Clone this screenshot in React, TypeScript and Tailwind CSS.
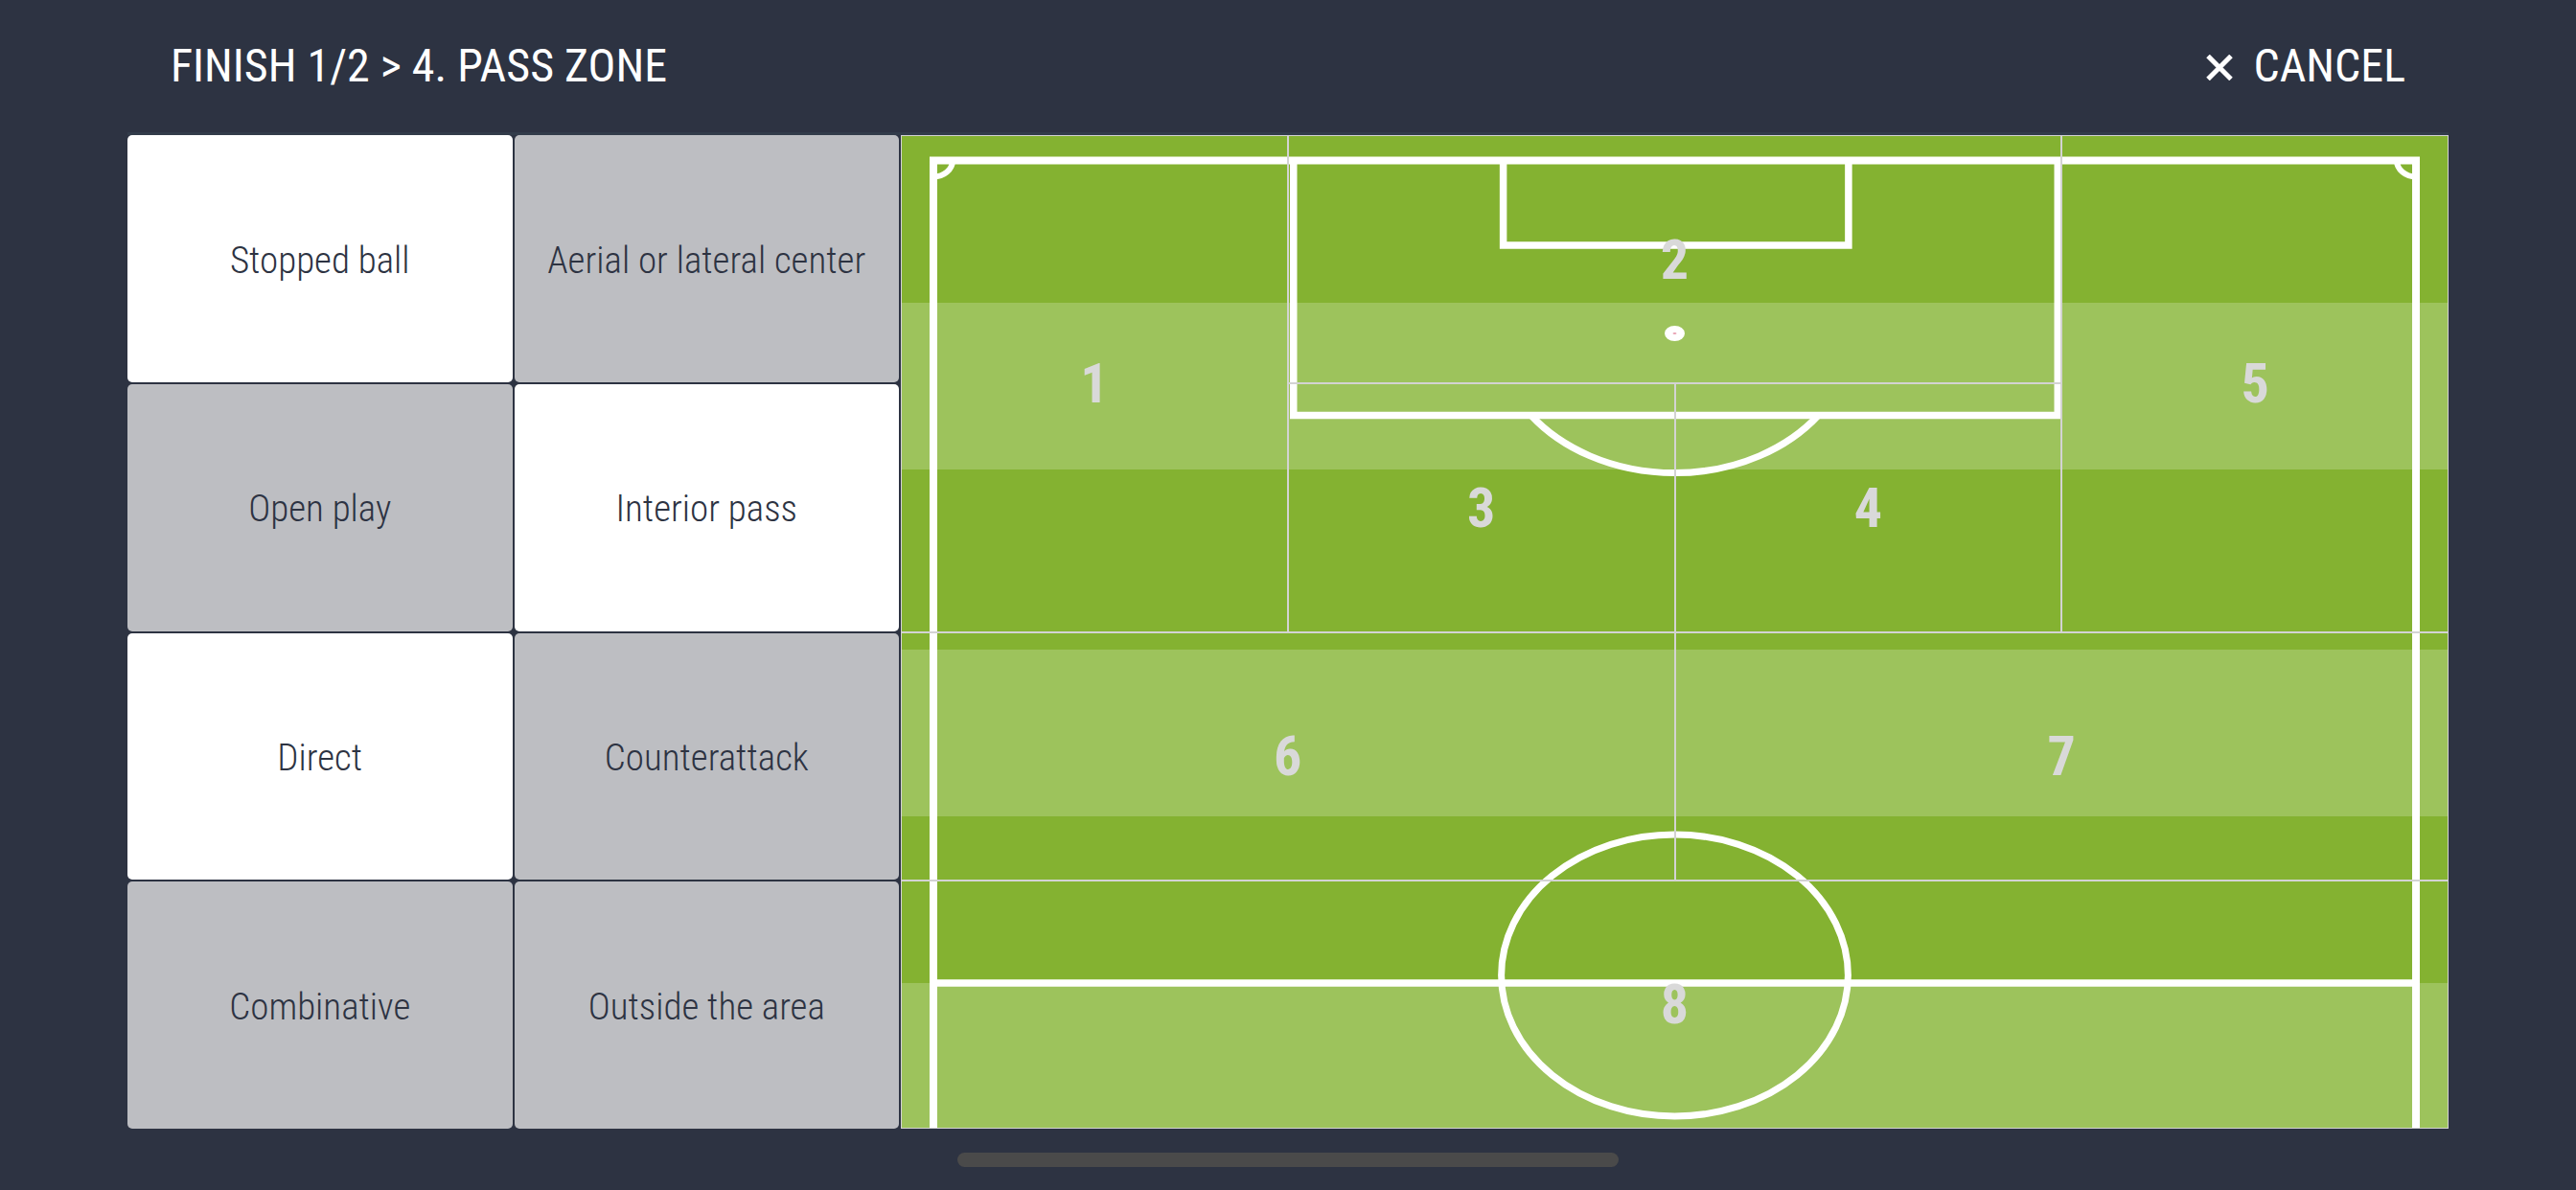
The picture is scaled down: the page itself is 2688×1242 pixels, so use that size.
import React from 'react';

type Cell = { label: string; active: boolean };

const CELLS: Cell[] = [
  { label: 'Stopped ball', active: true },
  { label: 'Aerial or lateral center', active: false },
  { label: 'Open play', active: false },
  { label: 'Interior pass', active: true },
  { label: 'Direct', active: true },
  { label: 'Counterattack', active: false },
  { label: 'Combinative', active: false },
  { label: 'Outside the area', active: false },
];

// zones laid over the pitch, 4x4 grid
const ZONES = [
  { n: 1, cls: 'col-start-1 row-start-1 row-span-2' },
  { n: 2, cls: 'col-start-2 col-span-2 row-start-1' },
  { n: 3, cls: 'col-start-2 row-start-2' },
  { n: 4, cls: 'col-start-3 row-start-2' },
  { n: 5, cls: 'col-start-4 row-start-1 row-span-2' },
  { n: 6, cls: 'col-start-1 col-span-2 row-start-3' },
  { n: 7, cls: 'col-start-3 col-span-2 row-start-3' },
  { n: 8, cls: 'col-start-1 col-span-4 row-start-4' },
];

function CloseIcon() {
  return (
    <svg width="28" height="27" viewBox="0 0 28 27" className="mt-[2px]">
      <path d="M2 1.5 L26 25.5 M26 1.5 L2 25.5" stroke="white" strokeWidth="5" />
    </svg>
  );
}

function PitchDrawing() {
  const line = { stroke: 'white', strokeWidth: 7.5, fill: 'none' };
  return (
    <svg
      className="absolute inset-0 w-full h-full"
      viewBox="0 0 1616 1037"
      preserveAspectRatio="none"
    >
      {/* stripes */}
      <rect x="0" y="0" width="1616" height="1037" fill="#84b231" />
      <rect x="0" y="175" width="1616" height="174" fill="#9dc35c" />
      <rect x="0" y="537" width="1616" height="174" fill="#9dc35c" />
      <rect x="0" y="885" width="1616" height="152" fill="#9dc35c" />

      {/* outer lines */}
      <path d="M34 1037 V26.5 H1582 V1037" {...line} strokeWidth={8} />
      <path d="M54 26.5 A20 17 0 0 1 34 43.5" {...line} strokeWidth={6} />
      <path d="M1562 26.5 A20 17 0 0 0 1582 43.5" {...line} strokeWidth={6} />

      {/* penalty area */}
      <path d="M410 26.5 V292.5 H1208 V26.5" {...line} />
      <path d="M629 26.5 V115 H989.5 V26.5" {...line} />
      <ellipse cx="808" cy="207" rx="10.5" ry="8" fill="white" />
      <ellipse cx="808" cy="207" rx="2" ry="1" fill="#e9a3b4" />
      <path d="M658 292.5 A186.5 148 0 0 0 958 292.5" {...line} strokeWidth={7} />

      {/* halfway line + centre circle */}
      <path d="M34 885 H1582" {...line} />
      <ellipse cx="808" cy="877" rx="181" ry="147" {...line} strokeWidth={7} />
    </svg>
  );
}

function Pitch() {
  return (
    <div className="relative flex-1">
      <PitchDrawing />
      <div className="absolute inset-0 grid grid-cols-4 grid-rows-4">
        {ZONES.map((z) => (
          <div
            key={z.n}
            className={`${z.cls} border border-[#d3d3d3] flex items-center justify-center`}
          >
            <span className="text-[58px] leading-none font-bold text-[#d9d9d9]">{z.n}</span>
          </div>
        ))}
      </div>
    </div>
  );
}

export default function App() {
  return (
    <div className="h-[1242px] w-full bg-[#2d3342] flex flex-col font-['Roboto_Condensed',Roboto,sans-serif] overflow-hidden">
      <header className="h-[138px] flex items-center justify-between px-[178px] text-white">
        <h1 className="text-[48px] leading-none font-normal">FINISH 1/2 &gt; 4. PASS ZONE</h1>
        <button className="flex items-center gap-[21px] text-[48px] leading-none">
          <CloseIcon />
          <span>CANCEL</span>
        </button>
      </header>

      <div className="mx-[133px] h-[3px] bg-[#323c4a]" />

      <main className="mx-[133px] h-[1037px] flex gap-[2px]">
        <div className="w-[805px] grid grid-cols-2 grid-rows-4 gap-[2px]">
          {CELLS.map((c) => (
            <button
              key={c.label}
              className={`rounded-[5px] flex items-center justify-center pt-[4px] text-[39px] font-light text-[#2d3342] ${
                c.active ? 'bg-white' : 'bg-[#bdbec2]'
              }`}
            >
              {c.label}
            </button>
          ))}
        </div>
        <Pitch />
      </main>

      <div className="flex justify-center pt-[25px]">
        <div className="w-[690px] h-[15px] rounded-full bg-[#4a4a4a]" />
      </div>
    </div>
  );
}
